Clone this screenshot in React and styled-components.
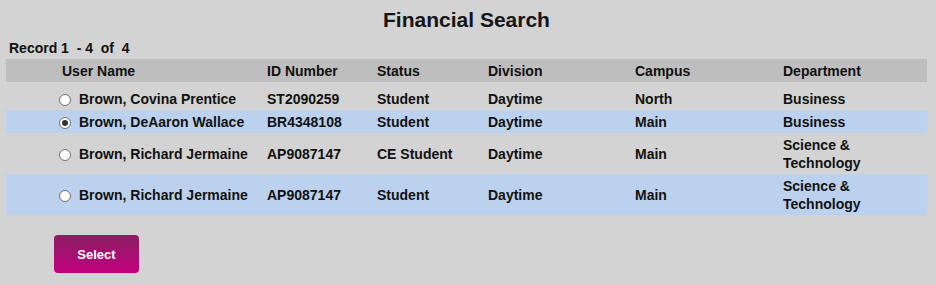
import React, { useState } from 'react';
import styled, { createGlobalStyle } from 'styled-components';

const GlobalStyle = createGlobalStyle`
  html, body {
    margin: 0;
    padding: 0;
    background: #d3d3d3;
  }
  body {
    font-family: "Liberation Sans", Arial, sans-serif;
    color: #111;
  }
`;

const Page = styled.div`
  padding: 8px 9px 12px 6px;
  min-height: 285px;
  box-sizing: border-box;
`;

const Title = styled.h1`
  margin: 0;
  font-size: 21px;
  line-height: 24px;
  font-weight: 700;
  text-align: center;
  color: #151515;
`;

const Counter = styled.div`
  margin-top: 8px;
  padding-left: 3px;
  font-size: 14px;
  line-height: 16px;
  font-weight: 700;
  white-space: pre;
`;

const COLS = '52px 205px 110px 111px 147px 148px 1fr';

const Header = styled.div`
  display: grid;
  grid-template-columns: ${COLS};
  margin-top: 3px;
  height: 23px;
  align-items: center;
  background: #bebebe;
  font-size: 14px;
  font-weight: 700;
`;

const Body = styled.div`
  margin-top: 5px;
`;

const Row = styled.div`
  display: grid;
  grid-template-columns: ${COLS};
  align-items: center;
  min-height: 23px;
  background: ${(p) => (p.$shaded ? '#bcd1ee' : 'transparent')};
  font-size: 14px;
  font-weight: 700;
  cursor: pointer;
`;

const Cell = styled.div`
  padding: 2.5px 0 2.5px 4px;
  line-height: 18px;
`;

const NameCell = styled(Cell)`
  display: flex;
  align-items: center;
  padding-left: 1px;
  white-space: nowrap;
`;

const DeptText = styled.div`
  max-width: 110px;
`;

const Radio = styled.span`
  width: 12px;
  height: 12px;
  margin: 3px 8px 0 0;
  flex: none;
  box-sizing: border-box;
  border-radius: 50%;
  border: 1px solid #6f6f6f;
  background: #fff;
  display: flex;
  align-items: center;
  justify-content: center;

  &::after {
    content: '';
    width: 6px;
    height: 6px;
    border-radius: 50%;
    background: ${(p) => (p.$checked ? '#333' : 'transparent')};
  }
`;

const SelectButton = styled.button`
  margin: 20px 0 0 48px;
  width: 85px;
  height: 38px;
  border: none;
  border-radius: 4px;
  background: linear-gradient(to bottom, #8a1f63, #c3007f);
  color: #fff;
  font-family: "Liberation Sans", Arial, sans-serif;
  font-size: 13px;
  font-weight: 700;
  cursor: pointer;
`;

const records = [
  { name: 'Brown, Covina Prentice', id: 'ST2090259', status: 'Student', division: 'Daytime', campus: 'North', dept: 'Business' },
  { name: 'Brown, DeAaron Wallace', id: 'BR4348108', status: 'Student', division: 'Daytime', campus: 'Main', dept: 'Business' },
  { name: 'Brown, Richard Jermaine', id: 'AP9087147', status: 'CE Student', division: 'Daytime', campus: 'Main', dept: 'Science & Technology' },
  { name: 'Brown, Richard Jermaine', id: 'AP9087147', status: 'Student', division: 'Daytime', campus: 'Main', dept: 'Science & Technology' },
];

const App = () => {
  const [selected, setSelected] = useState(1);
  return (
    <Page>
      <GlobalStyle />
      <Title>Financial Search</Title>
      <Counter>{'Record 1  - 4  of  4'}</Counter>
      <Header>
        <span />
        <Cell>User Name</Cell>
        <Cell>ID Number</Cell>
        <Cell>Status</Cell>
        <Cell>Division</Cell>
        <Cell>Campus</Cell>
        <Cell>Department</Cell>
      </Header>
      <Body>
        {records.map((r, i) => (
          <Row key={i} $shaded={i % 2 === 1} onClick={() => setSelected(i)}>
            <span />
            <NameCell>
              <Radio $checked={selected === i} />
              {r.name}
            </NameCell>
            <Cell>{r.id}</Cell>
            <Cell>{r.status}</Cell>
            <Cell>{r.division}</Cell>
            <Cell>{r.campus}</Cell>
            <Cell>
              <DeptText>{r.dept}</DeptText>
            </Cell>
          </Row>
        ))}
      </Body>
      <SelectButton>Select</SelectButton>
    </Page>
  );
};

export default App;
